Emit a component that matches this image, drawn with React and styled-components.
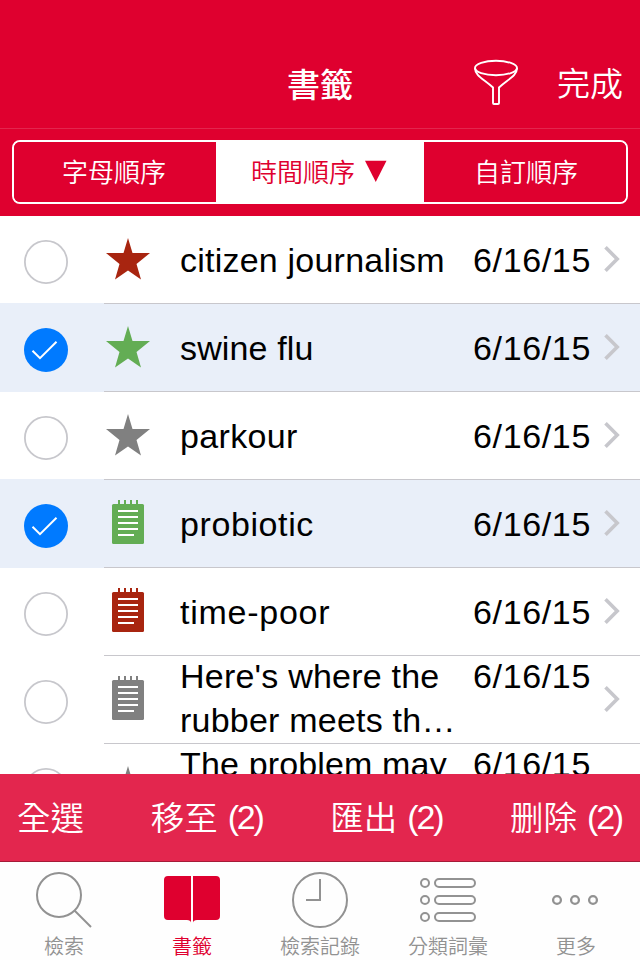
import React from "react";
import styled, { createGlobalStyle } from "styled-components";

const RED = "#df002f";
const GRAY = "#929292";

const GlobalStyle = createGlobalStyle`
  *, *::before, *::after { box-sizing: border-box; }
  body { margin: 0; background: #fff; }
  svg { display: block; flex: none; }
  button { border: 0; padding: 0; margin: 0; background: none; font: inherit; color: inherit; white-space: nowrap; }
`;

const Screen = styled.main`
  display: flex;
  flex-direction: column;
  width: 640px;
  height: 960px;
  overflow: hidden;
  font-family: "Liberation Sans", "Noto Sans CJK TC", sans-serif;
  color: #000;
  background: #fff;
`;

const NavBar = styled.header`
  display: grid;
  grid-template-columns: 1fr auto 1fr;
  align-items: center;
  height: 129px;
  padding: 40px 17px 4px;
  background: ${RED};
  border-bottom: 1px solid #e3264e;
  color: #fff;
  font-family: "Noto Sans CJK TC", sans-serif;
  font-size: 33px;
`;

const Title = styled.h1`
  grid-column: 2;
  margin: 0;
  padding-top: 2px;
  font-size: 33px;
  font-weight: 500;
  line-height: 48px;
`;

const NavActions = styled.div`
  display: flex;
  justify-content: flex-end;
  align-items: center;
  gap: 38px;
  font-weight: 350;
  line-height: 48px;
`;

const SegmentArea = styled.div`
  height: 87px;
  padding: 11px 12px 12px;
  background: ${RED};
`;

const Segments = styled.div`
  display: grid;
  grid-template-columns: 202px 208px 202px;
  height: 64px;
  border: 2px solid #fff;
  border-radius: 8px;
  overflow: hidden;
`;

const Segment = styled.button`
  display: flex;
  align-items: center;
  justify-content: center;
  gap: 10px;
  padding: 0 2px 4px 0;
  background: ${({ $active }) => ($active ? "#fff" : RED)};
  color: ${({ $active }) => ($active ? RED : "#fff")};
  font-family: "Noto Sans CJK TC", sans-serif;
  font-size: 26px;
  font-weight: 350;

  &:last-child {
    padding: 0 0 4px 2px;
  }
`;

const List = styled.ul`
  height: 558px;
  margin: 0;
  padding: 0;
  list-style: none;
  overflow: hidden;
`;

const Row = styled.li`
  display: grid;
  grid-template-columns: 104px 76px 293px 131px 36px;
  height: 88px;
  background: ${({ $selected }) => ($selected ? "#e9eff9" : "#fff")};
`;

const CheckCell = styled.div`
  padding: 24px 0 0 24px;
  box-shadow: ${({ $selected }) => ($selected ? "0 -1px 0 #e9eff9" : "none")};
`;

const IconCell = styled.div`
  padding: 20px 0 0 2px;
  border-bottom: 1px solid #c8c7cc;
`;

const Cell = styled.div`
  padding-top: ${({ $twoLine }) => ($twoLine ? "0" : "22px")};
  border-bottom: 1px solid #c8c7cc;
  font-size: 34px;
  line-height: 44px;
  white-space: pre;
`;

const Words = styled.span`
  display: block;
  margin-top: ${({ $twoLine }) => ($twoLine ? "-2px" : "0")};
  letter-spacing: ${({ $track = 0.2 }) => $track}px;
`;

const DateText = styled(Words)`
  letter-spacing: 0.65px;
`;

const ChevronCell = styled.div`
  padding-top: 30px;
  border-bottom: 1px solid #c8c7cc;
`;

const ActionBar = styled.div`
  display: flex;
  justify-content: space-between;
  align-items: center;
  height: 88px;
  padding: 0 17px 3px;
  background: #e3264e;
  border-bottom: 1px solid #a51b38;
  color: #fff;
  font-family: "Noto Sans CJK TC", sans-serif;
  font-size: 33.5px;
  font-weight: 350;
  line-height: 48px;
`;

const Action = styled.button`
  display: flex;
  align-items: center;
  gap: 10px;
`;

const Count = styled.span`
  margin: 2px 1px 0 0;
  font-family: "Liberation Sans", sans-serif;
  font-size: 34px;
  letter-spacing: -2.2px;
`;

const TabBar = styled.nav`
  display: grid;
  grid-template-columns: repeat(5, 128px);
  height: 98px;
  background: #fefefe;
`;

const Tab = styled.button`
  display: flex;
  flex-direction: column;
  align-items: center;
  gap: 1px;
  padding-top: 8px;
  color: ${({ $active }) => ($active ? RED : GRAY)};
  font-family: "Noto Sans CJK TC", sans-serif;
  font-size: 20px;
  font-weight: 350;
  line-height: 29px;
`;

const FunnelIcon = () => (
  <svg width="46" height="48" viewBox="473 58 46 48" fill="none" stroke="#fff" strokeWidth="1.9">
    <ellipse cx="496" cy="68" rx="21" ry="7.2" />
    <path d="M475 68C475 76 484 79 493 87.500V103Q493 104 494 104H498Q499 104 499 103V87.500C508 79 517 76 517 68" />
  </svg>
);

const TriangleIcon = () => (
  <svg width="22" height="24" viewBox="0 0 22 24" fill={RED}>
    <path d="M0 2.700H21.500L10.750 24Z" />
  </svg>
);

const CheckCircle = ({ on }) => (
  <svg width="44" height="44" viewBox="0 0 44 44" fill="none">
    {on ? (
      <>
        <circle cx="22" cy="22" r="22" fill="#007aff" />
        <path d="M8.500 22.700L16 30.200L32.500 13.700" stroke="#fff" strokeWidth="2" />
      </>
    ) : (
      <circle cx="22" cy="22" r="21.100" stroke="#c7c7cc" strokeWidth="1.800" />
    )}
  </svg>
);

const StarIcon = ({ color }) => (
  <svg width="44" height="48" viewBox="0 -2 44 48" fill={color}>
    <path d="M22 0L26.500 15H44L30.500 26L35 41.500L22 32.500L9 41.500L13.500 26L0 15H17.500Z" />
  </svg>
);

const NoteIcon = ({ color }) => (
  <svg width="44" height="48" viewBox="0 0 44 48">
    <rect x="6" y="4" width="32" height="40" rx="1.500" fill={color} />
    <path d="M13 0V5M19 0V5M25 0V5M31 0V5" stroke={color} strokeWidth="2" />
    <path d="M12 11H32M12 17H32M12 23H32M12 29H32M12 35H28" stroke="#fff" strokeWidth="2" />
  </svg>
);

const ChevronIcon = () => (
  <svg width="17" height="27" viewBox="0 0 17 27" fill="none" stroke="#c7c7cc" strokeWidth="3.600">
    <path d="M1.500 1.300L13.200 13L1.500 24.700" />
  </svg>
);

const TabIcon = ({ children }) => (
  <svg width="60" height="60" viewBox="0 0 60 60" fill="none" stroke={GRAY} strokeWidth="2">
    {children}
  </svg>
);

const SearchIcon = () => (
  <TabIcon>
    <circle cx="25" cy="25" r="22" />
    <path d="M40.500 40.500L57 57" />
  </TabIcon>
);

const BookIcon = () => (
  <TabIcon>
    <path
      stroke="none"
      fill={RED}
      d="M6 6H29V52.500Q28.500 50 25 50H6Q2 50 2 46V10Q2 6 6 6ZM31 6H54Q58 6 58 10V46Q58 50 54 50H35Q31.500 50 31 52.500Z"
    />
  </TabIcon>
);

const ClockIcon = () => (
  <TabIcon>
    <circle cx="30" cy="30" r="27" />
    <path d="M30 9V30H16" />
  </TabIcon>
);

const ListIcon = () => (
  <TabIcon>
    {[13, 30, 47].map((y) => (
      <g key={y}>
        <circle cx="7" cy={y} r="4" />
        <rect x="17" y={y - 4} width="40" height="8" rx="4" />
      </g>
    ))}
  </TabIcon>
);

const MoreIcon = () => (
  <TabIcon>
    {[11, 29, 47].map((x) => (
      <circle key={x} cx={x} cy="30" r="3.900" strokeWidth="2.300" />
    ))}
  </TabIcon>
);

const BRICK = "#a82510";
const GREEN = "#63ad54";
const MID = "#808080";

const entries = [
  { text: "citizen journalism", color: BRICK, track: 0.22 },
  { text: "swine flu", color: GREEN, selected: true, track: 0.15 },
  { text: "parkour", color: MID, track: 0.35 },
  { text: "probiotic", color: GREEN, note: true, selected: true, track: 0.6 },
  { text: "time-poor", color: BRICK, note: true, track: 0.75 },
  { text: "Here's where the\nrubber meets th…", color: MID, note: true, twoLine: true, track: 0.22 },
  { text: "The problem may", color: MID, twoLine: true, track: 0.15 },
];

const tabs = [
  { label: "檢索", Icon: SearchIcon },
  { label: "書籤", Icon: BookIcon, active: true },
  { label: "檢索記錄", Icon: ClockIcon },
  { label: "分類詞彙", Icon: ListIcon },
  { label: "更多", Icon: MoreIcon },
];

const actions = [
  { label: "全選" },
  { label: "移至", count: 2 },
  { label: "匯出", count: 2 },
  { label: "删除", count: 2 },
];

export default function App() {
  return (
    <Screen>
      <GlobalStyle />
      <NavBar>
        <Title>書籤</Title>
        <NavActions>
          <button aria-label="篩選"><FunnelIcon /></button>
          <button>完成</button>
        </NavActions>
      </NavBar>
      <SegmentArea>
        <Segments>
          <Segment>字母順序</Segment>
          <Segment $active>時間順序<TriangleIcon /></Segment>
          <Segment>自訂順序</Segment>
        </Segments>
      </SegmentArea>
      <List>
        {entries.map(({ text, color, note, selected, twoLine, track }) => (
          <Row key={text} $selected={selected}>
            <CheckCell $selected={selected}><CheckCircle on={selected} /></CheckCell>
            <IconCell>{note ? <NoteIcon color={color} /> : <StarIcon color={color} />}</IconCell>
            <Cell $twoLine={twoLine}><Words $twoLine={twoLine} $track={track}>{text}</Words></Cell>
            <Cell $twoLine={twoLine}><DateText $twoLine={twoLine}>6/16/15</DateText></Cell>
            <ChevronCell><ChevronIcon /></ChevronCell>
          </Row>
        ))}
      </List>
      <ActionBar>
        {actions.map(({ label, count }) => (
          <Action key={label}>
            {label}
            {count && <Count>({count})</Count>}
          </Action>
        ))}
      </ActionBar>
      <TabBar>
        {tabs.map(({ label, Icon, active }) => (
          <Tab key={label} $active={active}>
            <Icon />
            {label}
          </Tab>
        ))}
      </TabBar>
    </Screen>
  );
}
